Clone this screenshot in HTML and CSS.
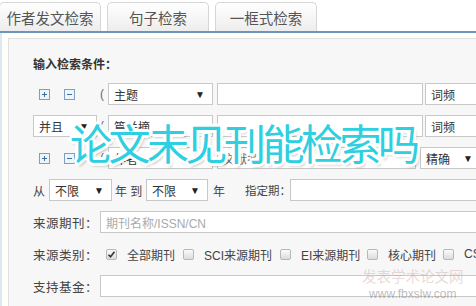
FILE: index.html
```html
<!DOCTYPE html>
<html lang="zh-CN">
<head>
    <meta charset="UTF-8">
    <meta name="viewport" content="width=device-width, initial-scale=1.0">
    <title>高级检索</title>
    <link rel="stylesheet" href="styles.css">
</head>
<body>
    <!-- Search type tabs -->
    <div class="tabs">
        <div class="tab">作者发文检索</div>
        <div class="tab">句子检索</div>
        <div class="tab">一框式检索</div>
    </div>
    <div class="tab-line"></div>

    <div class="outer">
        <div class="panel">
            <div class="title">输入检索条件：</div>

            <div class="row">
                <span class="icon-btn plus"><svg width="11" height="11" viewBox="0 0 11 11"><rect x="0.5" y="0.5" width="10" height="10" fill="#eef4fb" stroke="#7f9fc0"/><path d="M3 5.5h5M5.5 3v5" stroke="#3f6e9c" stroke-width="1"/></svg></span>
                <span class="icon-btn minus"><svg width="11" height="11" viewBox="0 0 11 11"><rect x="0.5" y="0.5" width="10" height="10" fill="#eef4fb" stroke="#7f9fc0"/><path d="M3 5.5h5" stroke="#3f6e9c" stroke-width="1"/></svg></span>
                <span class="paren">(</span>
                <div class="sel field-sel">主题<span class="arrow">▼</span></div>
                <div class="inp field-inp"></div>
                <div class="sel freq-sel">词频<span class="arrow">▼</span></div>
            </div>

            <div class="row">
                <div class="sel logic-sel">并且<span class="arrow">▼</span></div>
                <span class="paren paren-near">(</span>
                <div class="sel field-sel">篇关摘<span class="arrow">▼</span></div>
                <div class="inp field-inp"></div>
                <div class="sel freq-sel">词频<span class="arrow">▼</span></div>
            </div>

            <div class="row">
                <span class="icon-btn plus"><svg width="11" height="11" viewBox="0 0 11 11"><rect x="0.5" y="0.5" width="10" height="10" fill="#eef4fb" stroke="#7f9fc0"/><path d="M3 5.5h5M5.5 3v5" stroke="#3f6e9c" stroke-width="1"/></svg></span>
                <span class="icon-btn minus"><svg width="11" height="11" viewBox="0 0 11 11"><rect x="0.5" y="0.5" width="10" height="10" fill="#eef4fb" stroke="#7f9fc0"/><path d="M3 5.5h5" stroke="#3f6e9c" stroke-width="1"/></svg></span>
                <span class="paren">(</span>
                <div class="sel field-sel">作者<span class="arrow">▼</span></div>
                <div class="inp short-inp"><span class="ghost">文献名与</span></div>
                <div class="sel exact-sel">精确<span class="arrow">▼</span></div>
            </div>

            <div class="row row-spaced">
                <span class="lbl lbl-from">从</span>
                <div class="sel year-sel">不限<span class="arrow">▼</span></div>
                <span class="lbl lbl-to">年 到</span>
                <div class="sel year-sel year-sel-2">不限<span class="arrow">▼</span></div>
                <span class="lbl lbl-year">年</span>
                <span class="lbl lbl-issue">指定期：</span>
                <div class="inp wide-inp"></div>
            </div>

            <div class="row row-spaced">
                <span class="lbl row-label">来源期刊：</span>
                <div class="inp wide-inp"><span class="placeholder">期刊名称/ISSN/CN</span></div>
            </div>

            <div class="row row-spaced">
                <span class="lbl row-label">来源类别：</span>
                <div class="checks">
                    <label class="chk chk-all"><span class="cb"><svg width="9" height="9" viewBox="0 0 9 9"><path d="M1.5 4.8l2 2 4-5" fill="none" stroke="#333" stroke-width="1.6"/></svg></span>全部期刊</label>
                    <label class="chk chk-sci"><span class="cb"></span>SCI来源期刊</label>
                    <label class="chk chk-ei"><span class="cb"></span>EI来源期刊</label>
                    <label class="chk chk-core"><span class="cb"></span>核心期刊</label>
                    <label class="chk"><span class="cb"></span>CSSCI</label>
                </div>
            </div>

            <div class="row">
                <span class="lbl row-label">支持基金：</span>
                <div class="inp wide-inp"></div>
            </div>
        </div>
    </div>

    <!-- Caption laid over the form -->
    <div class="caption">论文未见刊能检索吗</div>

    <div class="watermark">
        <div class="wm-name">发表学术论文网</div>
        <div class="wm-url">www.fbxslw.com</div>
    </div>
</body>
</html>
```

FILE: styles.css
```css
* {
    box-sizing: border-box;
}

body {
    margin: 0;
    width: 476px;
    height: 306px;
    overflow: hidden;
    position: relative;
    background: #fff;
    color: #333;
    font-family: "Liberation Sans", "Noto Sans CJK SC", sans-serif;
    font-size: 12px;
}

/* Tabs */
.tabs {
    display: flex;
    gap: 6px;
    margin-left: -1px;
    padding-top: 2px;
    height: 31px;
}

.tab {
    width: 102px;
    height: 29px;
    border: 1px solid #d6d6d6;
    border-bottom: none;
    border-radius: 5px 5px 0 0;
    background: linear-gradient(#ffffff, #ededed);
    color: #555;
    font-size: 14.5px;
    display: flex;
    align-items: center;
    justify-content: center;
}

.tab-line {
    height: 2px;
    background: #6b96ba;
}

/* Form panel */
.outer {
    border-left: 2px solid #dde8f1;
    padding: 5px 0 0 6px;
    background: #fffffc;
}

.panel {
    width: 700px;
    height: 400px;
    border: 1px solid #e1e1e1;
    background: #f7f7f7;
    padding: 19px 0 0 24px;
}

.title {
    line-height: 14px;
    height: 14px;
    font-weight: 700;
    color: #333;
    margin-bottom: 11px;
}

.row {
    display: flex;
    align-items: center;
    height: 22px;
    margin-bottom: 10px;
    white-space: nowrap;
}

.row-spaced {
    margin-top: 1px;
}

.icon-btn {
    display: flex;
    width: 11px;
    height: 11px;
}

.icon-btn.plus {
    margin-left: 6px;
}

.icon-btn.minus {
    margin-left: 14px;
}

.paren {
    width: 8px;
    margin-left: 25px;
    color: #666;
}

.paren.paren-near {
    margin-left: 3px;
}

.sel {
    height: 22px;
    border: 1px solid #c8c8c8;
    background: #fff;
    display: flex;
    align-items: center;
    justify-content: space-between;
    padding: 0 7px 0 5px;
    color: #333;
    flex-shrink: 0;
}

.arrow {
    font-size: 10px;
    color: #222;
}

.inp {
    height: 22px;
    border: 1px solid #c8c8c8;
    background: #fff;
    flex-shrink: 0;
    display: flex;
    align-items: center;
    padding-left: 5px;
}

.field-sel {
    width: 105px;
}

.field-inp {
    width: 206px;
    margin-left: 4px;
}

.freq-sel {
    width: 80px;
    margin-left: 2px;
}

.logic-sel {
    width: 64px;
}

.short-inp {
    width: 199px;
    margin-left: 4px;
}

.ghost {
    color: #666;
}

.exact-sel {
    width: 58px;
    margin-left: 4px;
    padding-right: 4px;
}

.year-sel {
    width: 63px;
}

.year-sel-2 {
    width: 62px;
}

.lbl {
    color: #444;
    flex-shrink: 0;
}

.lbl-from {
    width: 16px;
}

.lbl-to {
    width: 34px;
    padding-left: 3px;
}

.lbl-year {
    width: 37px;
    padding-left: 5px;
}

.lbl-issue {
    width: 45px;
    font-size: 11.5px;
}

.wide-inp {
    width: 500px;
}

.row-label {
    width: 67px;
    font-size: 12.5px;
    letter-spacing: 0.5px;
}

.placeholder {
    color: #aaa;
}

/* Source type checkboxes */
.checks {
    display: flex;
    align-items: center;
    padding-left: 6px;
}

.chk {
    display: flex;
    align-items: center;
    color: #444;
    flex-shrink: 0;
}

.chk-all {
    width: 77px;
}

.chk-sci {
    width: 97px;
}

.chk-ei {
    width: 87px;
}

.chk-core {
    width: 76px;
}

.cb {
    width: 11px;
    height: 11px;
    margin-right: 10px;
    border: 1px solid #b8b8b8;
    border-radius: 2px;
    background: linear-gradient(#fbfbfb, #dcdcdc);
    display: flex;
    align-items: center;
    justify-content: center;
}

/* Overlaid caption */
.caption {
    position: absolute;
    left: 70px;
    top: 121px;
    font-family: "Noto Sans CJK SC", sans-serif;
    font-size: 42px;
    line-height: 42px;
    letter-spacing: -3.5px;
    color: #2dcfe1;
    white-space: nowrap;
    text-shadow:
        2px 0 #fff, -2px 0 #fff, 0 2px #fff, 0 -2px #fff,
        2px 2px #fff, -2px -2px #fff, 2px -2px #fff, -2px 2px #fff,
        3px 0 #fff, 0 3px #fff, -3px 0 #fff, 0 -3px #fff,
        2px 3px 3px rgba(0, 0, 0, 0.3);
}

.watermark {
    position: absolute;
    left: 362px;
    top: 267px;
    text-align: center;
}

.wm-name {
    font-size: 14.5px;
    line-height: 20px;
    color: rgba(200, 160, 160, 0.4);
}

.wm-url {
    font-size: 12px;
    line-height: 14px;
    color: rgba(120, 120, 120, 0.5);
}
```
